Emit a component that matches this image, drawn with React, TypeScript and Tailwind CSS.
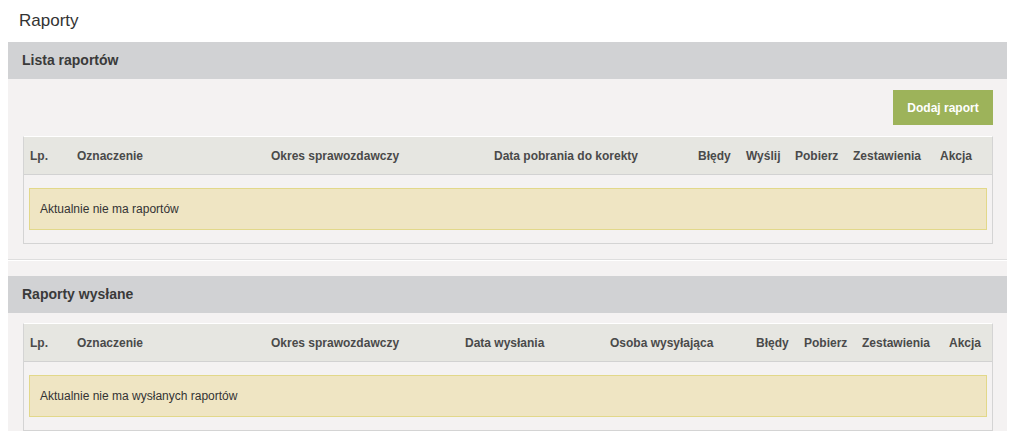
const font = { fontFamily: '"Liberation Sans", Arial, sans-serif' };

type Col = { label: string; width: number };

const listCols: Col[] = [
  { label: "Lp.", width: 47 },
  { label: "Oznaczenie", width: 194 },
  { label: "Okres sprawozdawczy", width: 223 },
  { label: "Data pobrania do korekty", width: 204 },
  { label: "Błędy", width: 48 },
  { label: "Wyślij", width: 49 },
  { label: "Pobierz", width: 58 },
  { label: "Zestawienia", width: 87 },
  { label: "Akcja", width: 52 },
];

const sentCols: Col[] = [
  { label: "Lp.", width: 47 },
  { label: "Oznaczenie", width: 194 },
  { label: "Okres sprawozdawczy", width: 194 },
  { label: "Data wysłania", width: 145 },
  { label: "Osoba wysyłająca", width: 146 },
  { label: "Błędy", width: 48 },
  { label: "Pobierz", width: 58 },
  { label: "Zestawienia", width: 87 },
  { label: "Akcja", width: 43 },
];

function ReportTable({ cols, empty }: { cols: Col[]; empty: string }) {
  return (
    <div className="border border-[#d4d4d4] border-t-white">
      <div className="flex h-[38px] items-center border-b border-[#d2d2d2] bg-[#e6e6e1]">
        {cols.map((c) => (
          <div
            key={c.label}
            className="shrink-0 whitespace-nowrap pl-[6px] text-[12px] font-bold text-[#4a4a4a]"
            style={{ width: c.width }}
          >
            {c.label}
          </div>
        ))}
      </div>
      <div className="px-[5px] pt-[13px] pb-[13px]">
        <div className="flex h-[42px] items-center border border-[#e2d88a] bg-[#efe5c3] pl-[10px] text-[12px] text-[#333]">
          {empty}
        </div>
      </div>
    </div>
  );
}

function SectionHeader({ title }: { title: string }) {
  return (
    <div className="flex h-[37px] items-center bg-[#d1d2d4] pl-[14px] text-[14px] font-bold text-[#3a3a3a]">
      {title}
    </div>
  );
}

export default function App() {
  return (
    <div className="h-[447px] w-[1012px] overflow-hidden bg-white" style={font}>
      <div className="h-[42px] pl-[19px] pt-[11px] text-[17px] leading-[20px] text-[#333]">Raporty</div>
      <div className="ml-[8px] w-[999px] bg-[#f4f2f2]">
        <SectionHeader title="Lista raportów" />
        <div className="border-b border-[#dedede] pl-[15px] pr-[14px] pt-[11px] pb-[15px]">
          <div className="flex justify-end">
            <button className="h-[35px] w-[100px] bg-[#9db35a] text-[12px] font-bold text-white">
              Dodaj raport
            </button>
          </div>
          <div className="mt-[11px]">
            <ReportTable cols={listCols} empty="Aktualnie nie ma raportów" />
          </div>
        </div>
        <div className="h-[16px] border-t border-white" />
        <SectionHeader title="Raporty wysłane" />
        <div className="pl-[15px] pr-[14px] pt-[10px]">
          <ReportTable cols={sentCols} empty="Aktualnie nie ma wysłanych raportów" />
        </div>
      </div>
    </div>
  );
}
